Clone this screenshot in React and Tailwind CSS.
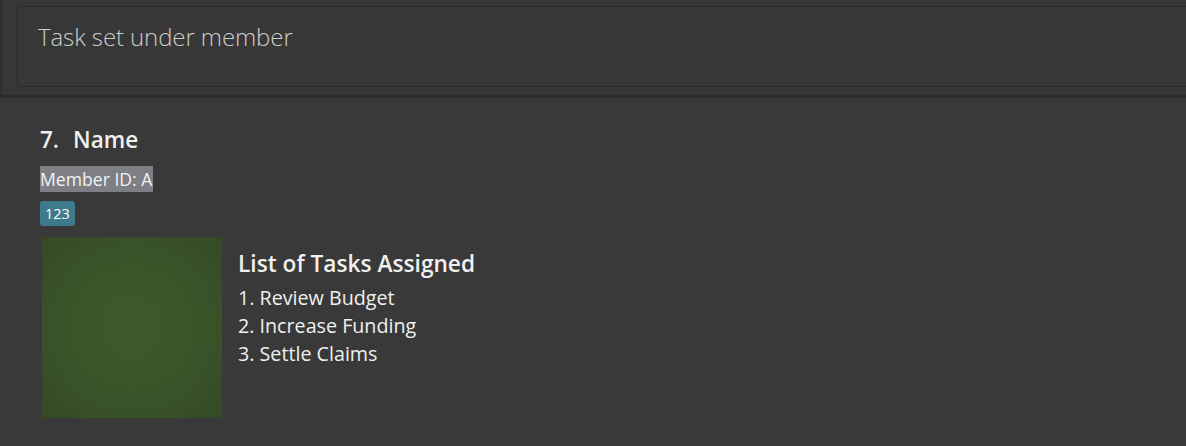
export default function App() {
  const font = { fontFamily: '"Open Sans", "Noto Sans", sans-serif' };
  return (
    <div className="w-[1186px] h-[446px] overflow-hidden bg-[#393939] flex flex-col" style={font}>
      <div className="h-[95px] shrink-0 bg-[#373737] border-l-2 border-[#2e2e2e] pl-[15px] pt-[6px]">
        <div className="h-[81px] border border-[#2a2a2a] border-r-0 bg-[#373737] pl-[20px] pt-[14px]">
          <div className="text-[24px] leading-[32px] font-light text-[#cdcdcd] tracking-[-0.1px]">Task set under member</div>
        </div>
      </div>
      <div className="h-[3px] shrink-0 bg-[#2c2c2c]" />
      <div className="flex-1 pl-[40px] pt-[27px]">
        <div className="text-[22.5px] leading-[30px] font-semibold text-[#f0f0f0] flex">
          <span>7.</span>
          <span className="ml-[14px]">Name</span>
        </div>
        <div className="mt-[11px] h-[26px] flex">
          <span className="block bg-[#7d7f85] text-[#f2f2f2] text-[17.6px] leading-[26px] h-[26px] pr-[1px]">Member ID: A</span>
        </div>
        <div className="mt-[9px] h-[25px] flex">
          <span className="block bg-[#3d7a8c] text-white text-[14.5px] leading-[25px] h-[25px] px-[5px] rounded-[3px]">123</span>
        </div>
        <div className="flex mt-[11px]">
          <div
            className="w-[180px] h-[181px] ml-[2px] shrink-0"
            style={{ background: "radial-gradient(ellipse at center, #3f5a2c 0%, #3a5429 55%, #334a25 100%)" }}
          />
          <div className="ml-[16px] pt-[12px] text-[#f0f0f0]">
            <div className="text-[22.7px] leading-[30px] font-semibold">List of Tasks Assigned</div>
            <div className="text-[19.7px] leading-[28px] mt-[5px]">
              <div>1. Review Budget</div>
              <div>2. Increase Funding</div>
              <div>3. Settle Claims</div>
            </div>
          </div>
        </div>
      </div>
    </div>
  );
}
